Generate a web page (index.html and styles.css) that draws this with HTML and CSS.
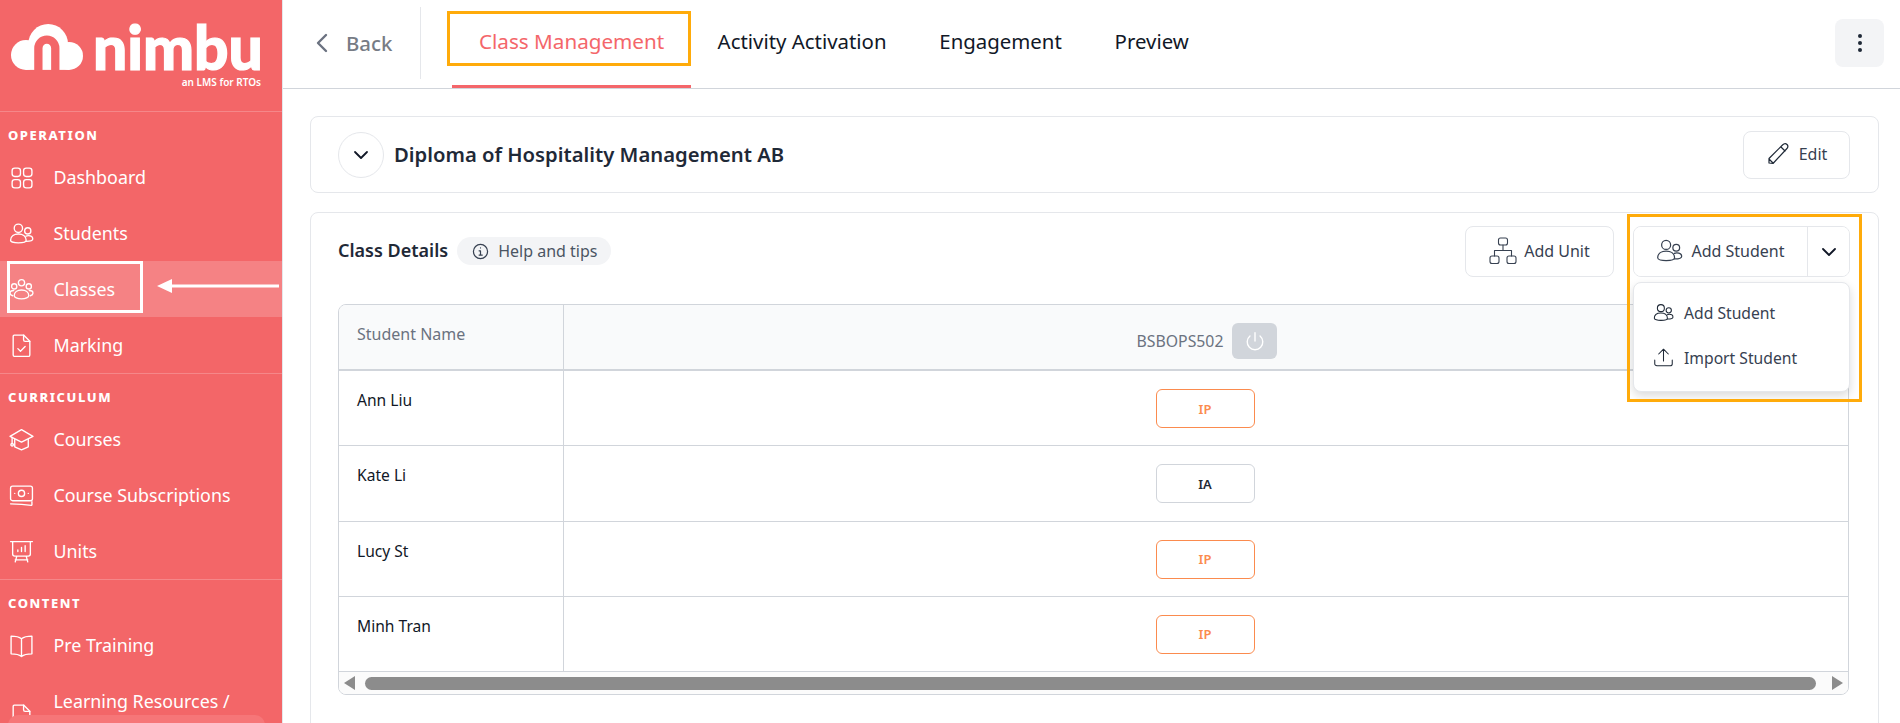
FILE: index.html
```html
<!DOCTYPE html>
<html lang="en">
<head>
<meta charset="utf-8">
<title>Class Management</title>
<link rel="stylesheet" href="styles.css">
</head>
<body>
<svg class="defs" width="0" height="0" aria-hidden="true">
  <symbol id="i-users" viewBox="0 0 24 24">
    <circle cx="9" cy="7" r="4"/><circle cx="18" cy="9.5" r="3"/>
    <path d="M1.5 18.5c0-4 3.5-6 7.5-6s7.5 2 7.5 6c0 1.5-3.5 2.5-7.5 2.5s-7.5-1-7.5-2.5z"/>
    <path d="M16.3 14.6c.6-.3 1.4-.5 2.2-.5 2.600 0 4.300 1.400 4.300 3.200 0 1.300-2.300 2.200-6.300 2.200"/>
  </symbol>
</svg>
<div class="app">
  <aside class="sidebar">
    <div class="logo">
      <div class="logo-row">
        <svg class="cloud" viewBox="33 70 217 138"><g class="cloud-body"><circle cx="78" cy="163" r="45"/><circle cx="145" cy="130" r="60"/><circle cx="208" cy="166" r="42"/><rect x="78" y="130" width="130" height="78"/></g><path class="cloud-cut" d="M115.500 212V142.500a25.500 25.500 0 0 1 51 0V212"/></svg>
        <span class="logo-name">nimbu</span>
      </div>
      <div class="logo-tag">an LMS for RTOs</div>
    </div>
    <nav>
      <section class="nav-section">
        <h2 class="nav-title">OPERATION</h2>
        <a class="nav-item"><svg class="nav-icon" viewBox="0 0 24 24"><rect x="3" y="3" width="8" height="8" rx="2.500"/><rect x="14" y="3" width="8" height="8" rx="2.500"/><rect x="3" y="14" width="8" height="8" rx="2.500"/><rect x="14" y="14" width="8" height="8" rx="2.500"/></svg>Dashboard</a>
        <a class="nav-item"><svg class="nav-icon"><use href="#i-users"/></svg>Students</a>
        <a class="nav-item active"><svg class="nav-icon" viewBox="0 0 24 24"><circle cx="12" cy="5.500" r="3"/><circle cx="5" cy="9" r="2.500"/><circle cx="19" cy="9" r="2.500"/><path d="M5 18c0-3.500 3-5.500 7-5.500s7 2 7 5.500c0 1.500-3 3-7 3s-7-1.500-7-3z"/><path d="M3.500 18C2 17.500 1 16.500 1 15.500 1 14 2.500 13 4.500 13M20.500 18c1.500-.5 2.500-1.500 2.500-2.500 0-1.500-1.500-2.500-3.500-2.500"/></svg>Classes</a>
        <a class="nav-item"><svg class="nav-icon" viewBox="0 0 24 24"><path d="M5 2h9l6 6v13a1.500 1.500 0 0 1-1.500 1.500h-13.500A1.500 1.500 0 0 1 4 21V3a1 1 0 0 1 1-1z"/><path d="M14 2v4.500a1.500 1.500 0 0 0 1.500 1.500H20M8.500 15l2.500 2.500 4.500-4.500"/></svg>Marking</a>
      </section>
      <section class="nav-section">
        <h2 class="nav-title">CURRICULUM</h2>
        <a class="nav-item"><svg class="nav-icon" viewBox="0 0 24 24"><path d="M12 2.500 23 9l-11 5.500L1 9z"/><path d="M5.500 12v7l6.500 3 6.500-3v-7M3 10v6"/><circle cx="3" cy="17" r="1.200"/></svg>Courses</a>
        <a class="nav-item"><svg class="nav-icon" viewBox="0 0 24 24"><rect x="1.500" y="3" width="21" height="14" rx="2"/><circle cx="12" cy="10" r="3"/><path d="M1.500 20c6 0 14 .5 20 1.500M22 18v3M5.500 10h.01M18.500 10h.01"/></svg>Course Subscriptions</a>
        <a class="nav-item"><svg class="nav-icon" viewBox="0 0 24 24"><path d="M1.500 2.500h21M3.500 2.500v12a2 2 0 0 0 2 2h13a2 2 0 0 0 2-2v-12M6 22l1.500-5.500M18 22l-1.500-5.500M6 20h12M8.500 12v-1.500M12 12V8M15.500 12V6.500"/></svg>Units</a>
      </section>
      <section class="nav-section">
        <h2 class="nav-title">CONTENT</h2>
        <a class="nav-item"><svg class="nav-icon" viewBox="0 0 24 24"><path d="M12 5.500C9.500 3.500 6 3 2 3v17c4 0 7.500.5 10 2.500 2.500-2 6-2.500 10-2.500V3c-4 0-7.500.5-10 2.500zM12 5.500v17"/></svg>Pre Training</a>
        <a class="nav-item nav-item-tall"><svg class="nav-icon" viewBox="0 0 24 24"><path d="M5 2h9l6 6v13a1.500 1.500 0 0 1-1.500 1.500h-13.500A1.500 1.500 0 0 1 4 21V3a1 1 0 0 1 1-1z"/><path d="M14 2v4.500a1.500 1.500 0 0 0 1.500 1.500H20"/></svg><span>Learning Resources / Assessments</span></a>
      </section>
    </nav>
    <div class="side-pill"></div>
  </aside>

  <main class="main">
    <header class="topbar">
      <a class="back"><svg class="back-icon" viewBox="0 0 12 20"><path d="M10 2 2 10l8 8"/></svg>Back</a>
      <div class="tabs">
        <a class="tab tab-active">Class Management</a>
        <a class="tab">Activity Activation</a>
        <a class="tab">Engagement</a>
        <a class="tab">Preview</a>
      </div>
      <button class="kebab"><span></span><span></span><span></span></button>
    </header>

    <div class="content">
      <section class="card course-card">
        <button class="circle-btn"><svg class="chev" viewBox="0 0 16 10"><path d="m2 2 6 6 6-6"/></svg></button>
        <h1 class="course-title">Diploma of Hospitality Management AB</h1>
        <button class="btn edit-btn"><svg class="btn-icon" viewBox="0 0 24 24"><path d="M3 21v-4.500L16.500 3c1.500-1.500 3.500-1.500 4.500-.5s1 3-.5 4.500L7 21.500zM3 17l4 4M15 5l4 4"/></svg>Edit</button>
      </section>

      <section class="card class-card">
        <div class="toolbar">
          <h2 class="details-title">Class Details</h2>
          <a class="help"><svg class="help-icon" viewBox="0 0 24 24"><circle cx="12" cy="12" r="10"/><path d="M10 11h2v6M10 17h4.500M12 7h.01"/></svg>Help and tips</a>
          <div class="toolbar-right">
            <button class="btn unit-btn"><svg class="btn-icon-lg" viewBox="0 0 28 28"><rect x="9.500" y="1" width="9" height="7" rx="2"/><rect x="1" y="19" width="9" height="7.500" rx="2"/><rect x="18" y="19" width="9" height="7.500" rx="2"/><path d="M14 8v5.500M5.500 19v-5.500h17V19"/></svg>Add Unit</button>
            <div class="split">
              <button class="split-main"><svg class="btn-icon-lg users-icon"><use href="#i-users"/></svg>Add Student</button>
              <button class="split-caret"><svg class="chev" viewBox="0 0 16 10"><path d="m2 2 6 6 6-6"/></svg></button>
            </div>
          </div>
        </div>

        <div class="table-wrap">
          <table class="grid">
            <thead>
              <tr><th class="name-col">Student Name</th><th class="unit-col"><span class="unit-head">BSBOPS502<button class="power"><svg viewBox="0 0 24 24"><path d="M12 3v9M6.500 6.500a8.500 8.500 0 1 0 11 0"/></svg></button></span></th></tr>
            </thead>
            <tbody>
              <tr><td>Ann Liu</td><td class="status-cell"><span class="status ip">IP</span></td></tr>
              <tr><td>Kate Li</td><td class="status-cell"><span class="status ia">IA</span></td></tr>
              <tr><td>Lucy St</td><td class="status-cell"><span class="status ip">IP</span></td></tr>
              <tr><td>Minh Tran</td><td class="status-cell"><span class="status ip">IP</span></td></tr>
            </tbody>
          </table>
          <div class="scrollbar"><span class="arrow arrow-left"></span><span class="thumb"></span><span class="arrow arrow-right"></span></div>
        </div>

        <div class="menu">
          <a class="menu-item"><svg class="menu-icon"><use href="#i-users"/></svg>Add Student</a>
          <a class="menu-item"><svg class="menu-icon" viewBox="0 0 24 24"><path d="M12 16V3M6.500 8 12 2.500 17.500 8M2 15v4a2.500 2.500 0 0 0 2.500 2.500h15A2.500 2.500 0 0 0 22 19v-4"/></svg>Import Student</a>
        </div>
      </section>
    </div>
  </main>
</div>

<div class="mark mark-side"></div>
<svg class="mark-arrow" viewBox="0 0 122 16"><path d="M14 8h108" /><path class="mark-head" d="M0 8 15 1v14z"/></svg>
<div class="mark mark-tab"></div>
<div class="mark mark-menu"></div>
</body>
</html>
```
FILE: styles.css
```css
* { box-sizing: border-box; }
html, body { margin: 0; height: 723px; overflow: hidden; }
body { font-family: "Noto Sans", sans-serif; color: #111827; background: #fff; position: relative; }
.defs { position: absolute; }
button { font-family: inherit; cursor: pointer; }
h1, h2 { margin: 0; }
symbol { overflow: visible; }
svg { fill: none; stroke: currentColor; stroke-linecap: round; stroke-linejoin: round; }
.app { display: flex; height: 723px; }

/* sidebar */
.sidebar { width: 283px; flex: none; height: 723px; background: #f36668; color: #fff; border-right: 1px solid #e5e7eb; overflow: hidden; position: relative; }
.logo { height: 111px; padding: 23px 0 0 11px; }
.logo-row { display: flex; align-items: flex-end; height: 47px; }
.cloud { width: 72px; height: 46px; flex: none; stroke: none; }
.cloud-body { fill: #fff; }
.cloud-cut { fill: none; stroke: #f36668; stroke-width: 25; stroke-linecap: butt; }
.logo-name { font-family: "Lato", sans-serif; font-weight: 900; font-size: 60.500px; line-height: 46px; margin-left: 10px; -webkit-text-stroke: 1.200px #fff; }
.logo-tag { text-align: right; padding-right: 21px; font-size: 10px; font-weight: 600; line-height: 14px; margin-top: 5px; }
.nav-section { border-top: 1px solid rgba(255,255,255,.22); }
.nav-title { font-size: 13px; font-weight: 800; letter-spacing: 1.550px; line-height: 18px; padding: 14px 0 5px 8px; height: 37px; }
.nav-item { display: flex; align-items: center; height: 56px; padding-left: 9px; font-size: 17.850px; gap: 19.500px; }
.nav-item.active { background: #f58284; }
.nav-item-tall { height: 84px; line-height: 28px; width: 260px; }
.nav-icon { width: 25px; height: 25px; flex: none; stroke-width: 1.300; }
.side-pill { position: absolute; left: 8px; top: 715px; width: 257px; height: 30px; border-radius: 10px; background: #f67678; }

/* top bar */
.main { flex: 1; min-width: 0; display: flex; flex-direction: column; }
.topbar { height: 89px; flex: none; border-bottom: 1px solid #d1d5db; display: flex; align-items: flex-start; padding-left: 33px; padding-right: 16px; }
.back { display: flex; align-items: center; width: 105px; height: 72px; margin-top: 7px; border-right: 1px solid #e5e7eb; font-size: 20.400px; color: #777c85; font-weight: 500; }
.back-icon { width: 12px; height: 20px; margin-right: 18px; stroke: #6b7280; stroke-width: 2.400; }
.tabs { display: flex; margin-left: 31px; height: 88px; }
.tab { display: flex; align-items: center; padding: 0 26.400px; font-size: 20.400px; height: 82px; color: #111827; }
.tab-active { font-size: 20.650px; padding: 0 27px 3px; color: #f4666a; height: 88px; border-bottom: 3px solid #f4666a; }
.kebab { margin-left: auto; margin-top: 19px; width: 49px; height: 48px; border: 0; border-radius: 8px; background: #f3f4f6; display: flex; flex-direction: column; align-items: center; justify-content: center; gap: 3px; }
.kebab span { width: 4px; height: 4px; border-radius: 50%; background: #1f2937; }

/* cards */
.content { padding: 27px 21px 0 27px; display: flex; flex-direction: column; gap: 19px; }
.card { border: 1px solid #e5e7eb; border-radius: 8px; background: #fff; }
.course-card { height: 77px; display: flex; align-items: center; padding: 0 28px 0 27px; }
.circle-btn { width: 46px; height: 46px; border-radius: 50%; border: 1px solid #e5e7eb; background: #fff; display: flex; align-items: center; justify-content: center; padding: 0; margin-right: 10px; color: #111827; }
.chev { width: 16px; height: 10px; stroke-width: 1.800; display: block; }
.course-title { font-size: 20.250px; font-weight: 600; color: #1f2937; padding-bottom: 2px; }
.btn { display: flex; align-items: center; justify-content: center; background: #fff; border: 1px solid #e5e7eb; border-radius: 8px; color: #374151; font-size: 16px; padding: 0 0 2px; }
.edit-btn { margin-left: auto; width: 107px; height: 48px; gap: 9px; }
.btn-icon { width: 24px; height: 24px; stroke-width: 1.200; color: #1f2937; }

.class-card { position: relative; height: 560px; padding: 13px 28px 0 27px; }
.toolbar { display: flex; align-items: flex-start; height: 51px; }
.details-title { font-size: 18px; font-weight: 600; line-height: 51px; color: #1f2937; margin-top: -1px; }
.help { display: flex; align-items: center; height: 28px; margin-top: 11px; margin-left: 9px; padding: 0 14px 0 15px; border-radius: 14px; background: #f3f4f6; font-size: 16px; color: #4b5563; gap: 9px; }
.help-icon { width: 17px; height: 17px; stroke-width: 1.700; color: #374151; }
.toolbar-right { margin-left: auto; display: flex; gap: 19px; }
.unit-btn { width: 149px; height: 51px; gap: 7px; }
.btn-icon-lg { width: 28px; height: 28px; stroke-width: 1.100; color: #374151; }
.split { display: flex; width: 217px; height: 51px; border: 1px solid #e5e7eb; border-radius: 8px; overflow: hidden; }
.split-main { width: 174px; border: 0; border-right: 1px solid #e5e7eb; background: #fff; font-size: 16px; color: #374151; display: flex; align-items: center; justify-content: center; gap: 8px; padding: 0 0 2px; }
.split-caret { flex: 1; border: 0; background: #fff; padding: 0; display: flex; align-items: center; justify-content: center; color: #111827; }
.users-icon { width: 27px; height: 27px; }

/* table */
.table-wrap { margin: 27px 1px 0 0; border: 1px solid #d1d5db; border-radius: 8px; overflow: hidden; }
.grid { width: 100%; border-collapse: separate; border-spacing: 0; table-layout: fixed; font-size: 15.600px; }
.grid th { background: #f9fafb; height: 66px; border-bottom: 2px solid #d1d5db; font-weight: 400; color: #6b7280; font-size: 16px; vertical-align: top; padding: 0; }
.name-col { width: 225px; text-align: left; border-right: 1px solid #d1d5db; padding: 18px 0 0 18px !important; }
.unit-head { display: flex; align-items: center; justify-content: center; gap: 9px; margin: 18px 0 0 2px; height: 36px; font-size: 15.800px; }
.power { width: 45px; height: 36px; border: 0; border-radius: 6px; background: #d1d5db; color: #fff; display: flex; align-items: center; justify-content: center; padding: 0; }
.power svg { width: 22px; height: 22px; stroke-width: 1.500; }
.grid td { height: 75.330px; vertical-align: top; border-bottom: 1px solid #d1d5db; padding: 18px 0 0 18px; color: #111827; }
.grid td:first-child { border-right: 1px solid #d1d5db; line-height: 22px; }
.grid td.status-cell { padding: 18px 2px 0 0; text-align: center; }
.status { display: inline-flex; width: 99px; height: 39px; border-radius: 6px; align-items: center; justify-content: center; font-size: 13px; font-weight: 600; background: #fff; }
.ip { border: 1px solid #fb8b4e; color: #fb8b4e; }
.ia { border: 1px solid #d1d5db; color: #1f2937; }
.scrollbar { display: flex; align-items: center; height: 22px; background: #fbfbfb; padding: 0 5px; }
.arrow { width: 0; height: 0; border-top: 7px solid transparent; border-bottom: 7px solid transparent; flex: none; }
.arrow-left { border-right: 11px solid #8c8c8c; }
.arrow-right { border-left: 11px solid #8c8c8c; }
.thumb { flex: 1; height: 13px; border-radius: 7px; background: #8c8c8c; margin: 0 16px 0 10px; }

/* dropdown */
.menu { position: absolute; left: 1322px; top: 69px; width: 217px; height: 110px; background: #fff; border: 1px solid #e5e7eb; border-radius: 8px; box-shadow: 0 4px 10px rgba(0,0,0,.14); padding: 7px 0 0 19px; }
.menu-item { display: flex; align-items: center; height: 45px; gap: 10px; font-size: 15.700px; color: #374151; }
.menu-icon { width: 21px; height: 21px; stroke-width: 1.200; color: #1f2937; }

/* annotations */
.mark { position: absolute; }
.mark-side { left: 7px; top: 261px; width: 136px; height: 52px; border: 3px solid #fff; }
.mark-arrow { position: absolute; left: 157px; top: 278px; width: 122px; height: 16px; stroke: #fff; stroke-width: 3; }
.mark-head { fill: #fff; stroke: none; }
.mark-tab { left: 447px; top: 11px; width: 244px; height: 55px; border: 3px solid #ffab0a; }
.mark-menu { left: 1627px; top: 214px; width: 235px; height: 188px; border: 3px solid #ffab0a; }
```
